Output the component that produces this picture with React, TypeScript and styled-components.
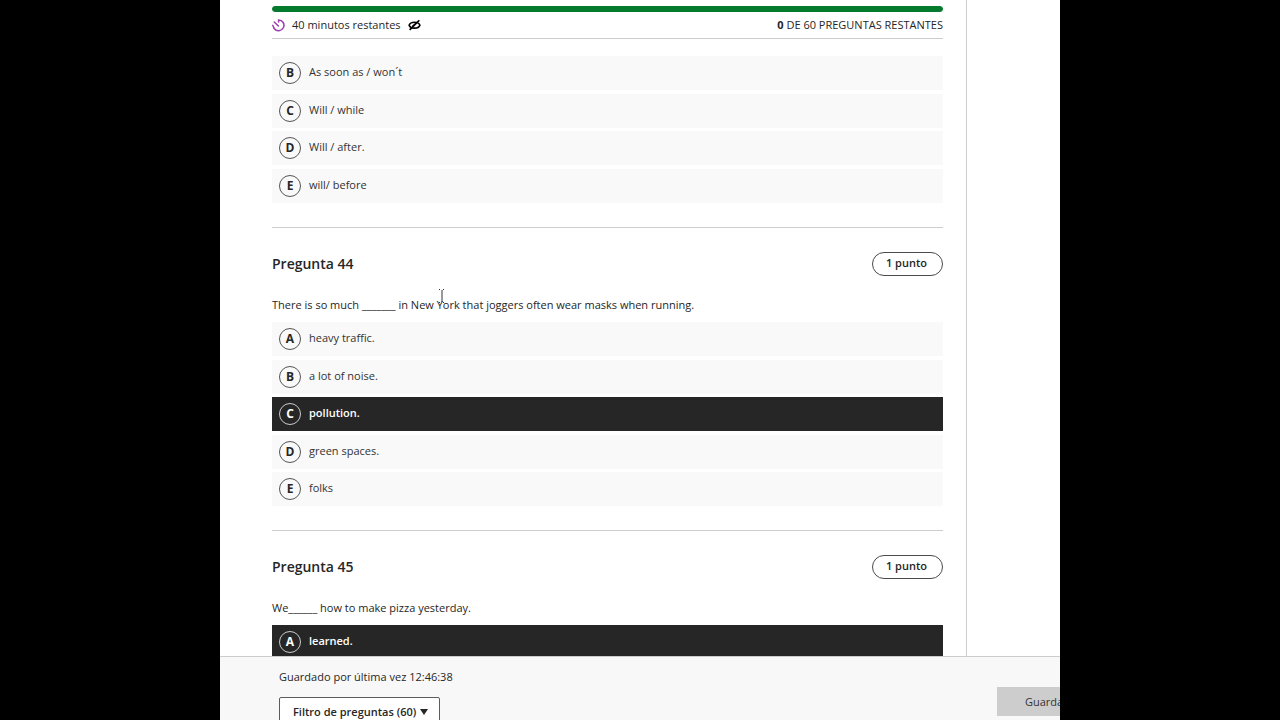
import React, { useState } from 'react';
import styled, { createGlobalStyle } from 'styled-components';

const GlobalStyle = createGlobalStyle`
  *, *::before, *::after { box-sizing: border-box; }
  body {
    margin: 0;
    background: #000;
    color: #262626;
    font-family: "Open Sans", "Noto Sans", sans-serif;
    font-size: 11px;
    line-height: 16px;
  }
  h2, p, fieldset, legend { margin: 0; padding: 0; border: 0; min-width: 0; }
`;

const Stage = styled.div`
  display: flex;
  height: 100vh;
  padding: 0 220px;
`;

const Frame = styled.div`
  position: relative;
  display: flex;
  flex-direction: column;
  flex: 1;
  min-width: 0;
  overflow: hidden;
  background: #fff;
`;

const Body = styled.div`
  display: flex;
  flex: 1;
  min-height: 0;
`;

const Main = styled.main`
  flex: 1;
  min-width: 0;
  overflow: hidden;
  padding: 6px 23px 0 52px;
`;

const Side = styled.aside`
  flex: 0 0 94px;
  border-left: 1px solid #cdcdcd;
`;

const ProgressTrack = styled.div`
  height: 6px;
  border-radius: 3px;
  background: #dedede;
  overflow: hidden;
`;

const ProgressFill = styled.div`
  height: 100%;
  border-radius: 3px;
  background: #047a2d;
`;

const StatusBar = styled.div`
  display: flex;
  align-items: center;
  justify-content: space-between;
  height: 27px;
  border-bottom: 1px solid #cdcdcd;
  margin-bottom: 17px;
`;

const Timer = styled.div`
  display: flex;
  align-items: center;
  gap: 7px;
`;

const IconButton = styled.button`
  display: flex;
  padding: 0;
  border: 0;
  background: none;
  color: #000;
`;

const Question = styled.section`
  padding-bottom: 24px;
  border-bottom: 1px solid #cdcdcd;
`;

const QuestionHeader = styled.div`
  display: flex;
  align-items: flex-start;
  justify-content: space-between;
  height: 24px;
  margin: 24px 0 21px;
`;

const QuestionTitle = styled.h2`
  font-size: 14px;
  line-height: 24px;
  font-weight: 600;
`;

const Points = styled.span`
  display: flex;
  justify-content: center;
  width: 71px;
  height: 24px;
  padding: 2px 2px 0 0;
  border: 1px solid #4a4a4a;
  border-radius: 12px;
  font-weight: 600;
`;

const Prompt = styled.p`
  margin-bottom: 9px;
`;

const Options = styled.fieldset<{ $height: number }>`
  display: flex;
  flex-direction: column;
  justify-content: space-between;
  height: ${(p) => p.$height}px;
`;

const OptionRow = styled.label<{ $selected: boolean }>`
  display: flex;
  align-items: center;
  gap: 8px;
  height: 34px;
  padding-left: 7px;
  background: ${(p) => (p.$selected ? '#262626' : '#f9f9f9')};
  color: ${(p) => (p.$selected ? '#fff' : '#333')};
  font-weight: ${(p) => (p.$selected ? 600 : 400)};
`;

const OptionText = styled.span`
  padding-bottom: 2px;
`;

const Badge = styled.span<{ $selected: boolean }>`
  display: grid;
  place-items: center;
  width: 22px;
  height: 22px;
  color: ${(p) => (p.$selected ? '#fff' : '#262626')};
  > * { grid-area: 1 / 1; }
`;

const Radio = styled.input`
  appearance: none;
  width: 22px;
  height: 22px;
  margin: 0;
  border: 1px solid #555;
  border-radius: 50%;
  &:checked { border-color: #ccc; }
`;

const Letter = styled.span`
  font-size: 12px;
  font-weight: 700;
`;

const Footer = styled.footer`
  display: flex;
  justify-content: space-between;
  align-items: flex-start;
  height: 64px;
  padding-left: 59px;
  border-top: 1px solid #cdcdcd;
  background: #f8f8f8;
`;

const SaveArea = styled.div`
  display: flex;
  flex-direction: column;
  gap: 12px;
  padding-top: 12px;
`;

const FilterBox = styled.div`
  display: grid;
  align-items: center;
  width: 161px;
  > * { grid-area: 1 / 1; }
  > svg { justify-self: end; margin-right: 12px; pointer-events: none; }
`;

const FilterSelect = styled.select`
  appearance: none;
  width: 100%;
  height: 30px;
  padding: 0 20px 0 13px;
  border: 1px solid #5c5c5c;
  border-radius: 2px;
  background: #fff;
  color: #262626;
  font: 600 11px/16px "Open Sans", "Noto Sans", sans-serif;
`;

const SaveSlot = styled.div`
  flex: 0 0 63px;
  min-width: 0;
  padding-top: 30px;
`;

const SaveButton = styled.button`
  width: 100px;
  height: 29px;
  padding: 0 0 0 28px;
  border: 0;
  background: #cdcdcd;
  color: #333;
  text-align: left;
  font: 400 11px/16px "Open Sans", "Noto Sans", sans-serif;
`;

const Pointer = styled.svg`
  position: absolute;
  left: 218px;
  top: 289px;
`;

const TimerIcon = () => (
  <svg width="13" height="14" viewBox="0 0 13 14" fill="none" stroke="#9b3fae" strokeWidth="1.5" strokeLinecap="round" aria-hidden="true">
    <path d="M6.600 4V1.900A5.400 5.400 0 1 1 2.200 10.500" />
    <path d="M2.200 4 6.400 8" />
    <path d="M.8 7.400 2.200 10.500" />
  </svg>
);

const HideIcon = () => (
  <svg width="13" height="12" viewBox="0 0 14 12" fill="none" stroke="currentColor" strokeWidth="1.8" aria-hidden="true">
    <path d="M1.200 6.200C2 4 4.400 3 7 3s5 1 5.800 3.200C12 8.400 9.600 9.400 7 9.400S2 8.400 1.200 6.200Z" />
    <path d="M4.600 7.600 8.600 3.800" strokeWidth="1.200" />
    <path d="M1.800 11.300 12.200 0.900" />
  </svg>
);

type Option = { letter: string; text: string };

const OptionList = ({ name, label, options, initial, height }: {
  name: string; label: string; options: Option[]; initial?: string; height: number;
}) => {
  const [value, setValue] = useState(initial);
  return (
    <Options $height={height} aria-label={label}>
      {options.map((o) => (
        <OptionRow key={o.letter} $selected={value === o.letter}>
          <Badge $selected={value === o.letter}>
            <Radio type="radio" name={name} checked={value === o.letter} onChange={() => setValue(o.letter)} />
            <Letter>{o.letter}</Letter>
          </Badge>
          <OptionText>{o.text}</OptionText>
        </OptionRow>
      ))}
    </Options>
  );
};

const Heading = ({ children }: { children: React.ReactNode }) => (
  <QuestionHeader>
    <QuestionTitle>{children}</QuestionTitle>
    <Points>1 punto</Points>
  </QuestionHeader>
);

export default function App() {
  return (
    <>
      <GlobalStyle />
      <Stage>
        <Frame>
          <Body>
            <Main>
              <ProgressTrack>
                <ProgressFill />
              </ProgressTrack>
              <StatusBar>
                <Timer>
                  <TimerIcon />
                  <span>40 minutos restantes</span>
                  <IconButton type="button" aria-label="Ocultar tiempo"><HideIcon /></IconButton>
                </Timer>
                <span><b>0</b> DE 60 PREGUNTAS RESTANTES</span>
              </StatusBar>

              <Question>
                <OptionList
                  name="q43"
                  label="Pregunta 43"
                  height={147}
                  options={[
                    { letter: 'B', text: 'As soon as / won´t' },
                    { letter: 'C', text: 'Will / while' },
                    { letter: 'D', text: 'Will / after.' },
                    { letter: 'E', text: 'will/ before' },
                  ]}
                />
              </Question>

              <Question>
                <Heading>Pregunta 44</Heading>
                <Prompt>There is so much _______ in New York that joggers often wear masks when running.</Prompt>
                <OptionList
                  name="q44"
                  label="Pregunta 44"
                  height={184}
                  initial="C"
                  options={[
                    { letter: 'A', text: 'heavy traffic.' },
                    { letter: 'B', text: 'a lot of noise.' },
                    { letter: 'C', text: 'pollution.' },
                    { letter: 'D', text: 'green spaces.' },
                    { letter: 'E', text: 'folks' },
                  ]}
                />
              </Question>

              <Question>
                <Heading>Pregunta 45</Heading>
                <Prompt>We______ how to make pizza yesterday.</Prompt>
                <OptionList
                  name="q45"
                  label="Pregunta 45"
                  height={34}
                  initial="A"
                  options={[{ letter: 'A', text: 'learned.' }]}
                />
              </Question>
            </Main>
            <Side />
          </Body>
          <Footer>
            <SaveArea>
              <span>Guardado por última vez 12:46:38</span>
              <FilterBox>
                <FilterSelect aria-label="Filtro de preguntas">
                  <option>Filtro de preguntas (60)</option>
                </FilterSelect>
                <svg width="8" height="6" viewBox="0 0 8 6" aria-hidden="true">
                  <path d="M0 0h8L4 6Z" fill="#262626" />
                </svg>
              </FilterBox>
            </SaveArea>
            <SaveSlot>
              <SaveButton type="button">Guardar</SaveButton>
            </SaveSlot>
          </Footer>
          <Pointer width="8" height="14" viewBox="0 0 8 14" fill="none" stroke="#333" aria-hidden="true">
            <path d="M1 .5h2M5 .5h2M1 13.500h2M5 13.500h2" strokeDasharray="1 1" />
            <path d="M4 1v12" />
          </Pointer>
        </Frame>
      </Stage>
    </>
  );
}
